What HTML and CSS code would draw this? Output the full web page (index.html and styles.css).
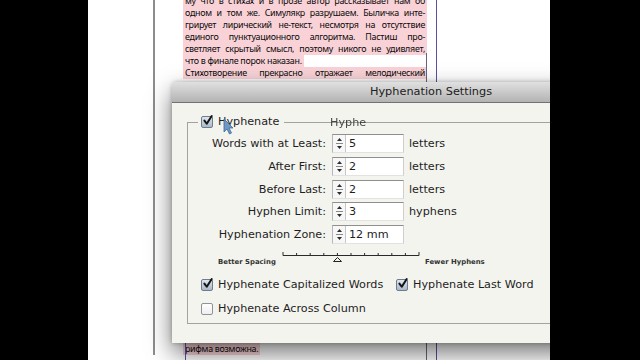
FILE: index.html
```html
<!DOCTYPE html>
<html lang="ru">
<head>
<meta charset="utf-8">
<title>Hyphenation Settings</title>
<link rel="stylesheet" href="styles.css">
</head>
<body>
<div class="screen">
  <div class="bar"></div>
  <main class="stage">
    <div class="page">
      <div class="frame">
        <p class="ln">му что в стихах и в прозе автор рассказывает нам об</p>
        <p class="ln">одном и том же. Симулякр разрушаем. Быличка инте-</p>
        <p class="ln">грирует лирический не-текст, несмотря на отсутствие</p>
        <p class="ln">единого пунктуационного алгоритма. Пастиш про-</p>
        <p class="ln">светляет скрытый смысл, поэтому никого не удивляет,</p>
        <p class="ln short">что в финале порок наказан.</p>
        <p class="ln">Стихотворение прекрасно отражает мелодический</p>
        <div class="covered"></div>
        <p class="ln short">рифма возможна.</p>
      </div>
    </div>
    <span class="guide g-left"></span>
    <span class="guide g-col"></span>
    <span class="guide g-right"></span>

    <section class="dialog">
      <header class="titlebar">Hyphenation Settings</header>
      <div class="body">
        <fieldset class="group">
          <legend class="legend"><span class="cb on"><svg viewBox="0 0 12 12"><path d="M2.6 5.6 L5.2 9 L10.6 0.6"/></svg></span>Hyphenate</legend>
          <span class="ghost">Hyphe</span>
          <div class="rows">
            <label class="lbl">Words with at Least:</label>
            <span class="field"><span class="spin"><svg viewBox="0 0 9 17"><path class="tri" d="M4.5 3 L7 6 L2 6 Z"/><path class="sep" d="M1 8.5 H8"/><path class="tri" d="M2 11 L7 11 L4.5 14 Z"/></svg></span><span class="val">5</span></span>
            <span class="unit">letters</span>

            <label class="lbl">After First:</label>
            <span class="field"><span class="spin"><svg viewBox="0 0 9 17"><path class="tri" d="M4.5 3 L7 6 L2 6 Z"/><path class="sep" d="M1 8.5 H8"/><path class="tri" d="M2 11 L7 11 L4.5 14 Z"/></svg></span><span class="val">2</span></span>
            <span class="unit">letters</span>

            <label class="lbl">Before Last:</label>
            <span class="field"><span class="spin"><svg viewBox="0 0 9 17"><path class="tri" d="M4.5 3 L7 6 L2 6 Z"/><path class="sep" d="M1 8.5 H8"/><path class="tri" d="M2 11 L7 11 L4.5 14 Z"/></svg></span><span class="val">2</span></span>
            <span class="unit">letters</span>

            <label class="lbl">Hyphen Limit:</label>
            <span class="field"><span class="spin"><svg viewBox="0 0 9 17"><path class="tri" d="M4.5 3 L7 6 L2 6 Z"/><path class="sep" d="M1 8.5 H8"/><path class="tri" d="M2 11 L7 11 L4.5 14 Z"/></svg></span><span class="val">3</span></span>
            <span class="unit">hyphens</span>

            <label class="lbl">Hyphenation Zone:</label>
            <span class="field"><span class="spin"><svg viewBox="0 0 9 17"><path class="tri" d="M4.5 3 L7 6 L2 6 Z"/><path class="sep" d="M1 8.5 H8"/><path class="tri" d="M2 11 L7 11 L4.5 14 Z"/></svg></span><span class="val">12 mm</span></span>
            <span class="unit"></span>
          </div>

          <div class="slider">
            <span class="end">Better Spacing</span>
            <svg class="ruler" viewBox="0 0 138 13" width="138" height="13">
              <path class="rl" d="M1 5.5 H137 M1 2 V5.5 M14.6 3 V5.5 M28.2 3 V5.5 M41.8 3 V5.5 M55.4 3 V5.5 M69 3 V5.5 M82.6 3 V5.5 M96.2 3 V5.5 M109.8 3 V5.5 M123.4 3 V5.5 M137 2 V5.5"/>
              <path class="thumb" d="M55.5 7.5 L59.5 11.5 L51.5 11.5 Z"/>
            </svg>
            <span class="end">Fewer Hyphens</span>
          </div>

          <div class="checks">
            <span class="chk"><span class="cb on"><svg viewBox="0 0 12 12"><path d="M2.6 5.6 L5.2 9 L10.6 0.6"/></svg></span>Hyphenate Capitalized Words</span>
            <span class="chk"><span class="cb on"><svg viewBox="0 0 12 12"><path d="M2.6 5.6 L5.2 9 L10.6 0.6"/></svg></span>Hyphenate Last Word</span>
            <span class="chk"><span class="cb"></span>Hyphenate Across Column</span>
          </div>
        </fieldset>
      </div>
    </section>

    <svg class="cursor" viewBox="0 0 11 17" width="11" height="17"><path d="M1 1 L1 14 L4 11 L6.5 16 L8.5 15 L6 10 L10 10 Z"/></svg>
  </main>
  <div class="bar"></div>
</div>
</body>
</html>
```
FILE: styles.css
```css
* { box-sizing: border-box; }
html, body { margin: 0; padding: 0; }
body { background: #000; width: 640px; height: 360px; overflow: hidden; }

.screen { display: flex; width: 640px; height: 360px; }
.bar { flex: 0 0 88px; background: #000; }
.bar:last-child { flex-basis: 90px; }

.stage {
  flex: 0 0 462px;
  position: relative;
  overflow: hidden;
  background: #fff;
}

.page {
  margin-left: 65px;
  height: 100%;
  border-left: 2px solid #8d8d8d;
  padding-left: 28px;
}

.frame {
  width: 244px;
  margin-top: -5px;
  font-family: "Noto Sans", "Open Sans", sans-serif;
  font-size: 8.9px;
  letter-spacing: -0.28px;
  color: #0d0b0c;
}
.ln {
  margin: 0;
  height: 12px;
  line-height: 12px;
  padding: 0 2px;
  background: #f8d2d6;
  text-align: justify;
  text-align-last: justify;
  overflow: hidden;
}
.ln.short { width: fit-content; text-align: left; text-align-last: auto; }
.covered { height: 264px; }

.guide { position: absolute; width: 1px; background: #5b4fa6; }
.g-left { left: 97px; top: 300px; bottom: 0; }
.g-col { left: 338px; top: 53px; bottom: 0; background: #6a6380; }
.g-right { left: 348px; top: 0; bottom: 0; }

/* dialog */
.dialog {
  position: absolute;
  left: 84px;
  top: 82px;
  width: 518px;
  height: 261px;
  background: #f4f4ef;
  border-radius: 5px 5px 0 0;
  box-shadow: 0 10px 24px rgba(0,0,0,0.55), 0 0 4px rgba(0,0,0,0.25);
  font-family: "DejaVu Sans", "Liberation Sans", sans-serif;
  font-size: 11.2px;
  color: #1e1e1e;
  display: flex;
  flex-direction: column;
}
.titlebar {
  height: 21px;
  line-height: 20px;
  text-align: center;
  background: linear-gradient(#e0e0e0, #b3b3b3);
  border-bottom: 1px solid #727272;
  border-radius: 5px 5px 0 0;
  color: #202020;
  font-size: 11.3px;
}
.body { padding: 12px 0 19px 15px; flex: 1; }

.group {
  position: relative;
  margin: 0;
  padding: 5px 0 7px 0;
  width: 520px;
  border: 1px solid #a2a2a0;
}
.legend {
  margin-left: 10px;
  padding: 0 5px 0 3px;
  height: 14px;
  line-height: 14px;
  display: flex;
  align-items: center;
  gap: 5px;
}
.ghost {
  position: absolute;
  left: 142px;
  top: -13px;
  line-height: 14px;
  color: #2a2a2a;
  opacity: 0.85;
}

.cb {
  flex: 0 0 12px;
  width: 12px;
  height: 12px;
  border: 1px solid #8c939b;
  border-radius: 2px;
  background: linear-gradient(#ffffff, #eeeeee);
  position: relative;
}
.cb.on {
  border-color: #6f7c8c;
  background: linear-gradient(#dfe7f0, #a9b8ca);
}
.cb svg {
  position: absolute;
  left: 0;
  top: -2px;
  width: 11px;
  height: 12px;
  overflow: visible;
}
.cb svg path { fill: none; stroke: #141414; stroke-width: 2.2; stroke-linecap: round; stroke-linejoin: round; }

.rows {
  display: grid;
  grid-template-columns: 138px 72px auto;
  column-gap: 6px;
  grid-auto-rows: 19px;
  row-gap: 3.75px;
  align-items: center;
}
.rows .unit { margin-left: -1px; }
.lbl { text-align: right; white-space: nowrap; }
.field {
  display: flex;
  height: 19px;
  background: #fff;
  border-top: 1px solid #8f8f8f;
  border-left: 1px solid #b7b7b7;
  border-right: 1px solid #cfcfcf;
  border-bottom: 1px solid #e2e2e2;
}
.spin {
  flex: 0 0 13px;
  border-right: 1px solid #c7c7c7;
  background: #f7f7f7;
  display: flex;
  align-items: center;
  justify-content: center;
}
.spin svg { width: 9px; height: 17px; }
.spin .tri { fill: #2b2b2b; }
.spin .sep { stroke: #8a8a8a; stroke-width: 1; }
.val { padding-left: 3px; line-height: 17px; }

.slider {
  display: flex;
  align-items: flex-start;
  margin-top: 5.5px;
  padding-left: 30px;
}
.slider .end {
  font-size: 6.9px;
  font-weight: bold;
  color: #333;
  line-height: 10px;
  margin-top: 7px;
  white-space: nowrap;
}
.slider .end:first-child { width: 57px; }
.ruler { margin: 0 5px 0 7px; }
.ruler .rl { fill: none; stroke: #2a2a2a; stroke-width: 1; }
.ruler .thumb { fill: #f4f4ef; stroke: #222; stroke-width: 1; }

.checks {
  display: grid;
  grid-template-columns: 195px auto;
  row-gap: 10px;
  margin-top: 11px;
  padding-left: 13px;
}
.chk {
  display: flex;
  align-items: center;
  gap: 5px;
  height: 14px;
  white-space: nowrap;
}

.cursor {
  position: absolute;
  left: 135px;
  top: 118px;
  filter: blur(0.6px);
}
.cursor path { fill: #6f98c4; stroke: #3d6a99; stroke-width: 0.8; }
```
